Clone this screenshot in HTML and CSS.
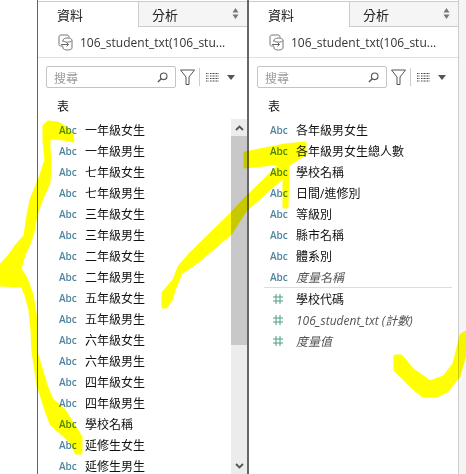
FILE: index.html
```html
<!DOCTYPE html>
<html lang="zh-Hant">

<head>
    <meta charset="UTF-8">
    <title>資料</title>
    <link rel="stylesheet" href="styles.css">
</head>

<body>
    <svg width="0" height="0" class="defs">
        <symbol id="source" viewBox="0 0 15 17">
            <path d="M5 12H3C1.800 12 1 11.500 1 10.500V3C1 1.800 1.800 1 3 1H9C10.200 1 11 1.800 11 3V3.800" fill="none" stroke="#777" />
            <path d="M5 8V6.200C5 5 7 4 9.500 4S14 5 14 6.200V14C14 15.200 12 16 9.500 16S5 15.200 5 14V12.500" fill="none" stroke="#777" />
            <path d="M5 6.500C5.500 7.500 7.500 8.200 9.500 8.200S13.500 7.500 14 6.500" fill="none" stroke="#777" />
            <path d="M3 10.500H10.500M8.500 8.500L10.500 10.500 8.500 12.500" fill="none" stroke="#666" />
        </symbol>
        <symbol id="lens" viewBox="0 0 12 12">
            <circle cx="7.300" cy="4.700" r="3.600" fill="none" stroke="#555" stroke-width="1.200" />
            <path d="M4.700 7.300L1 11" stroke="#555" stroke-width="1.500" />
        </symbol>
        <symbol id="funnel" viewBox="0 0 15 16">
            <path d="M.5 1h14L9 8v7.500H6V8z" fill="none" stroke="#555" />
        </symbol>
        <symbol id="columns" viewBox="0 0 13 9">
            <path d="M0 .5h3M4 .5h9M0 3h3M4 3h9M0 5.500h3M4 5.500h9M0 8h3M4 8h9" stroke="#444" stroke-dasharray="1 .5" />
        </symbol>
        <symbol id="sort" viewBox="0 0 7 11">
            <path d="M3.500 0L6.500 4.500H.5zM3.500 11L.5 6.500h6z" fill="#777" />
        </symbol>
        <symbol id="hash" viewBox="0 0 10 10">
            <path d="M3 0V10M7 0V10M0 3H10M0 7H10" stroke="#4a9e7e" fill="none" />
        </symbol>
    </svg>

    <div class="page">
        <div class="gutter"></div>

        <section class="panel panel-left">
            <div class="tabs">
                <div class="tab tab-active">資料</div>
                <div class="tab tab-other">分析<svg class="sort"><use href="#sort" /></svg></div>
            </div>
            <div class="source">
                <svg class="source-icon"><use href="#source" /></svg>
                <span class="source-name">106_student_txt(106_stu...</span>
            </div>
            <div class="tools">
                <div class="search">
                    <span class="search-text">搜尋</span>
                    <svg class="lens"><use href="#lens" /></svg>
                </div>
                <svg class="funnel"><use href="#funnel" /></svg>
                <div class="tool-line"></div>
                <svg class="columns"><use href="#columns" /></svg>
                <div class="caret"></div>
            </div>
            <h3 class="heading">表</h3>
            <div class="list-wrap">
                <ul class="fields">
                    <li class="field"><span class="type">Abc</span>一年級女生</li>
                    <li class="field"><span class="type">Abc</span>一年級男生</li>
                    <li class="field"><span class="type">Abc</span>七年級女生</li>
                    <li class="field"><span class="type">Abc</span>七年級男生</li>
                    <li class="field"><span class="type">Abc</span>三年級女生</li>
                    <li class="field"><span class="type">Abc</span>三年級男生</li>
                    <li class="field"><span class="type">Abc</span>二年級女生</li>
                    <li class="field"><span class="type">Abc</span>二年級男生</li>
                    <li class="field"><span class="type">Abc</span>五年級女生</li>
                    <li class="field"><span class="type">Abc</span>五年級男生</li>
                    <li class="field"><span class="type">Abc</span>六年級女生</li>
                    <li class="field"><span class="type">Abc</span>六年級男生</li>
                    <li class="field"><span class="type">Abc</span>四年級女生</li>
                    <li class="field"><span class="type">Abc</span>四年級男生</li>
                    <li class="field"><span class="type">Abc</span>學校名稱</li>
                    <li class="field"><span class="type">Abc</span>延修生女生</li>
                    <li class="field"><span class="type">Abc</span>延修生男生</li>
                </ul>
                <div class="scrollbar">
                    <div class="scroll-btn"><svg class="chevron" viewBox="0 0 9 6"><path d="M1 5l3.500-3.500L8 5" /></svg></div>
                    <div class="scroll-thumb"></div>
                    <div class="scroll-track"></div>
                    <div class="scroll-btn"><svg class="chevron" viewBox="0 0 9 6"><path d="M1 1l3.500 3.500L8 1" /></svg></div>
                </div>
            </div>
        </section>

        <section class="panel panel-right">
            <div class="tabs">
                <div class="tab tab-active">資料</div>
                <div class="tab tab-other">分析<svg class="sort"><use href="#sort" /></svg></div>
            </div>
            <div class="source">
                <svg class="source-icon"><use href="#source" /></svg>
                <span class="source-name">106_student_txt(106_stu...</span>
            </div>
            <div class="tools">
                <div class="search">
                    <span class="search-text">搜尋</span>
                    <svg class="lens"><use href="#lens" /></svg>
                </div>
                <svg class="funnel"><use href="#funnel" /></svg>
                <div class="tool-line"></div>
                <svg class="columns"><use href="#columns" /></svg>
                <div class="caret"></div>
            </div>
            <h3 class="heading">表</h3>
            <ul class="fields">
                <li class="field"><span class="type">Abc</span>各年級男女生</li>
                <li class="field"><span class="type">Abc</span>各年級男女生總人數</li>
                <li class="field"><span class="type">Abc</span>學校名稱</li>
                <li class="field"><span class="type">Abc</span>日間/進修別</li>
                <li class="field"><span class="type">Abc</span>等級別</li>
                <li class="field"><span class="type">Abc</span>縣市名稱</li>
                <li class="field"><span class="type">Abc</span>體系別</li>
                <li class="field field-calc"><span class="type">Abc</span>度量名稱</li>
                <li class="divider"></li>
                <li class="field"><span class="type"><svg class="hash"><use href="#hash" /></svg></span>學校代碼</li>
                <li class="field field-calc"><span class="type"><svg class="hash"><use href="#hash" /></svg></span>106_student_txt (計數)</li>
                <li class="field field-calc"><span class="type"><svg class="hash"><use href="#hash" /></svg></span>度量值</li>
            </ul>
        </section>

        <div class="gutter-right"></div>
    </div>

    <!-- hand-drawn marker strokes over the screenshot -->
    <svg class="marker" viewBox="0 0 466 474">
        <path d="M44 126L48 122 58 123 66 128 72 134 73 141 64 139 49 138 49 150 50 160 49 183 42 198 36 215 33 232 29 244 24 255 20 269 26 278 32 295 36 320 36 352 46 385 52 400 64 410 81 437 81 453 76 453 71 442 51 424 46 410 38 385 33 352 32 330 30 310 26 295 22 286 0 285 0 266 9 256 16 246 25 236 28 215 31 200 37 185 41 175 46 160 44 140Z" />
        <path d="M245 153L285 145 305 143 305 154 288 165 287 207 284 207 284 176 245 211 231 233 197 262 181 273 174 290 171 300 166 307 163 307 163 293 174 280 179 267 191 253 231 214 245 199 282 163 245 167Z" />
        <path d="M395 356L401 356 413 370 430 382 444 377 454 364 461 335 466 332 466 351 459 376 447 391 437 396 423 396 411 386 395 370Z" />
    </svg>
</body>

</html>
```

FILE: styles.css
```css
* {
    margin: 0;
    padding: 0;
    box-sizing: border-box;
    font-family: "Noto Sans CJK TC", "Open Sans", sans-serif;
}

html,
body {
    width: 466px;
    height: 474px;
    overflow: hidden;
    background-color: #fff;
}

.defs {
    position: absolute;
}

.page {
    display: flex;
    height: 474px;
}

.gutter {
    width: 37px;
}

.gutter-right {
    flex: 1;
    background-color: #f5f5f5;
    border-left: 1px solid #ccc;
}

.panel {
    display: flex;
    flex-direction: column;
    width: 210px;
    height: 474px;
    padding-top: 1px;
    background-color: #fff;
    color: #111;
    overflow: hidden;
}

.panel-left {
    border-left: 1px solid #666;
}

.panel-right {
    width: 211px;
    border-left: 2px solid #666;
}

.tabs {
    display: flex;
    height: 26px;
    border-top: 1px solid #ccc;
}

.tab {
    display: flex;
    align-items: center;
    font-size: 13px;
    color: #222;
}

.tab-active {
    width: 100px;
    padding-left: 19px;
}

.tab-other {
    flex: 1;
    padding-left: 13px;
    background-color: #f5f5f5;
    border-left: 1px solid #ccc;
    border-bottom: 1px solid #ccc;
}

.sort {
    width: 7px;
    height: 11px;
    margin-left: auto;
    margin-right: 8px;
    margin-top: -2px;
}

.source {
    display: flex;
    align-items: center;
    height: 31px;
    padding-left: 20px;
    border-bottom: 1px solid #e0e0e0;
}

.source-icon {
    width: 15px;
    height: 17px;
    margin-right: 7px;
}

.source-name {
    font-family: "Open Sans", sans-serif;
    font-size: 12px;
    color: #333;
    white-space: nowrap;
}

.tools {
    display: flex;
    align-items: center;
    height: 22px;
    margin-top: 8px;
    padding-left: 8px;
}

.search {
    display: flex;
    align-items: center;
    justify-content: space-between;
    width: 130px;
    height: 22px;
    padding: 0 7px;
    border: 1px solid #c4c4c4;
    border-radius: 2px;
}

.search-text {
    font-size: 12px;
    color: #999;
}

.lens {
    width: 11px;
    height: 11px;
}

.funnel {
    width: 15px;
    height: 16px;
    margin-left: 4px;
}

.tool-line {
    width: 1px;
    height: 18px;
    margin-left: 4px;
    background-color: #ccc;
}

.columns {
    width: 13px;
    height: 9px;
    margin-left: 6px;
}

.caret {
    margin-left: 8px;
    border-left: 4px solid transparent;
    border-right: 4px solid transparent;
    border-top: 5px solid #555;
}

.heading {
    height: 31px;
    padding: 8px 0 0 19px;
    font-size: 12px;
    font-weight: normal;
    line-height: 20px;
}

.list-wrap {
    display: flex;
    flex: 1;
    min-height: 0;
}

.fields {
    flex: 1;
    list-style: none;
}

.field {
    display: flex;
    align-items: center;
    height: 21px;
    font-family: "Open Sans", "Noto Sans CJK TC", sans-serif;
    font-size: 12px;
    white-space: nowrap;
}

.field-calc {
    font-style: italic;
    color: #555;
}

.type {
    display: flex;
    align-items: center;
    width: 47px;
    padding-left: 21px;
    font-family: "Open Sans", sans-serif;
    font-size: 10px;
    font-weight: 600;
    font-style: normal;
    color: #4e86a0;
}

.hash {
    width: 10px;
    height: 10px;
    margin-left: 3px;
}

.divider {
    height: 1px;
    margin: 0 6px 0 15px;
    background-color: #ddd;
}

.scrollbar {
    display: flex;
    flex-direction: column;
    width: 16px;
    background-color: #ececec;
}

.scroll-btn {
    display: flex;
    align-items: center;
    justify-content: center;
    height: 17px;
    flex: none;
}

.chevron {
    width: 9px;
    height: 6px;
}

.chevron path {
    fill: none;
    stroke: #555;
    stroke-width: 1.800;
}

.scroll-thumb {
    height: 209px;
    flex: none;
    background-color: #c8c8c8;
}

.scroll-track {
    flex: 1;
}

.marker {
    position: absolute;
    top: 0;
    left: 0;
    width: 466px;
    height: 474px;
    mix-blend-mode: multiply;
}

.marker path {
    fill: #ffff00;
    stroke: #ffff00;
    stroke-width: 3;
    stroke-linejoin: round;
}
```
